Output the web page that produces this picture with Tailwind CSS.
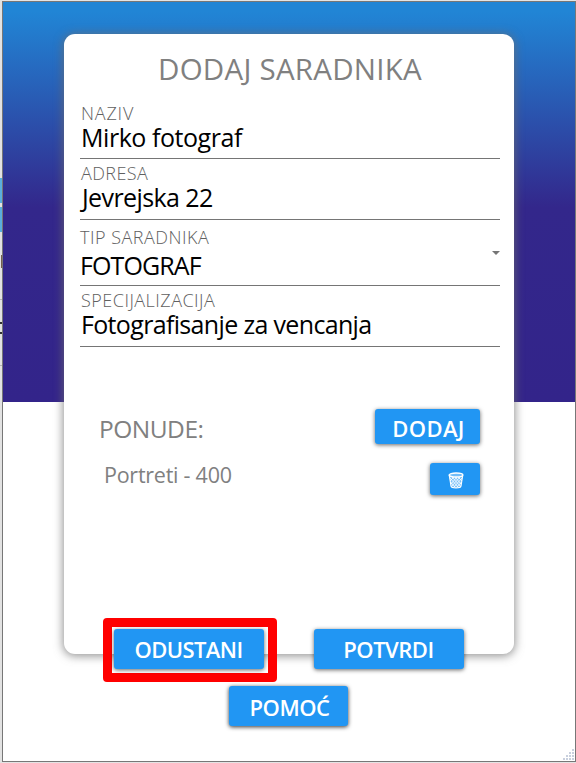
<!DOCTYPE html>
<html lang="sr"><head><meta charset="utf-8"><title>Dodaj saradnika</title>
<script src="https://cdn.jsdelivr.net/npm/@tailwindcss/browser@4"></script></head>
<body class="w-[576px] h-[763px] overflow-hidden bg-[#e4e4e4] font-['Open_Sans',sans-serif]">
<div class="flex h-[763px] w-[576px]">
  <!-- sliver of the window behind -->
  <div class="w-[2px] shrink-0 overflow-hidden bg-[#e2e2e2] flex flex-col">
    <div class="mt-[178px] h-[25px] bg-[#5aaede]"></div>
    <div class="mt-[4px] h-[25px] bg-[#5aaede]"></div>
    <div class="mt-[23px] h-[13px] bg-[linear-gradient(to_right,#e2e2e2_50%,#75604f_50%)]"></div>
    <div class="mt-[31px] h-px bg-[#b5b5b5]"></div>
    <div class="mt-[22px] h-[2px] bg-[#333]"></div>
    <div class="mt-[8px] h-[2px] bg-[#333]"></div>
    <div class="mt-[31px] h-px bg-[#b5b5b5]"></div>
  </div>
  <main class="relative mt-px mb-px flex-1 border border-[#777] bg-[linear-gradient(to_bottom,#2185d5_0px,#2185d5_10px,#33278b_205px,#33248a_399.5px,#fff_400px)] flex flex-col items-center">
    <section class="mt-[32px] w-[450px] h-[620px] shrink-0 rounded-[11px] bg-white shadow-[0_1px_10px_1px_rgba(110,110,110,0.75)] pl-[16px] pr-[14px] pt-[15px] flex flex-col">
      <h1 class="h-[40px] leading-[40px] text-[29.5px] tracking-[0.25px] text-center text-[#808080] whitespace-nowrap">DODAJ SARADNIKA</h1>
      <div class="mt-[14px] h-[56px] border-b border-[#757575] flex flex-col whitespace-nowrap pl-px">
        <label class="h-[20px] leading-[20px] text-[18px] font-light tracking-[0.8px] text-[#606060]">NAZIV</label>
        <span class="-mt-px h-[30px] leading-[30px] text-[25px] tracking-[-0.45px] text-black">Mirko fotograf</span>
      </div>
      <div class="mt-[4px] h-[57px] border-b border-[#757575] flex flex-col whitespace-nowrap">
        <label class="h-[20px] leading-[20px] text-[18px] font-light tracking-[0.4px] text-[#606060] pl-px">ADRESA</label>
        <span class="-mt-px h-[30px] leading-[30px] text-[25px] tracking-[-0.6px] text-black pl-[2px]">Jevrejska 22</span>
      </div>
      <div class="mt-[7px] h-[59px] border-b border-[#757575] flex justify-between whitespace-nowrap">
        <div class="flex flex-col">
          <label class="h-[20px] leading-[20px] text-[18px] font-light tracking-[0.5px] text-[#606060]">TIP SARADNIKA</label>
          <span class="mt-[3px] h-[30px] leading-[30px] text-[25px] tracking-[-0.9px] text-black">FOTOGRAF</span>
        </div>
        <svg class="mt-[24px] h-[4px] w-[8px]" viewBox="0 0 8 4"><path d="M0 0h8L4 4z" fill="#757575"/></svg>
      </div>
      <div class="mt-[4px] h-[57px] border-b border-[#757575] flex flex-col whitespace-nowrap pl-px">
        <label class="h-[20px] leading-[20px] text-[18px] font-light tracking-[0.48px] text-[#606060]">SPECIJALIZACIJA</label>
        <span class="-mt-px h-[30px] leading-[30px] text-[25px] tracking-[-0.66px] text-black">Fotografisanje za vencanja</span>
      </div>
      <div class="mt-[62px] flex h-[36px] items-start justify-between pl-[19px] pr-[20px]">
        <h2 class="mt-[4px] h-[32px] leading-[32px] text-[24.5px] tracking-[-0.5px] text-[#808080]">PONUDE:</h2>
        <button class="h-[35px] w-[105px] rounded-[3px] bg-[#2196f3] pt-[4px] pl-[2px] text-[22px] leading-[31px] font-semibold tracking-[0.4px] text-white shadow-[0_1px_4px_rgba(0,0,0,0.6)]">DODAJ</button>
      </div>
      <div class="mt-[18px] flex h-[32px] items-start justify-between pl-[24px] pr-[20px]">
        <span class="-mt-[3px] h-[30px] leading-[30px] text-[21.5px] tracking-[-0.25px] text-[#808080]">Portreti - 400</span>
        <button class="flex h-[32px] w-[50px] items-center justify-center rounded-[3px] bg-[#2196f3] shadow-[0_1px_4px_rgba(0,0,0,0.6)]">
          <svg class="ml-[2px] mt-[2px] h-[17px] w-[16px]" viewBox="0 0 16 17" fill="none" stroke="#fff"><path d="M1.3 3.5 3 14.2c.2 1.3 1.3 1.8 5 1.8s4.800-.5 5-1.800L14.700 3.500" fill="#fff" fill-opacity=".4" stroke-width="1.100"/><ellipse cx="8" cy="3" rx="6.900" ry="2" fill="#72bdf8" stroke-width="1.400"/><path d="m2 6 8.500 9.500M4 5l8.500 9.500M7 5l6 7M10 5l4 4M2.500 10l5 5.500M14 6l-8.500 9.500M12 5l-8.500 9.500M9 5l-6 7M6 5 2 9M13.500 10l-5 5.500" stroke-width=".8"/></svg>
        </button>
      </div>
    </section>
    <div class="-mt-[36px] mr-[12px] flex w-[361px] shrink-0 justify-between items-start">
      <div class="h-[64px] w-[174px] rounded-[4px] border-[9px] border-[#ff0000] pl-[2px] pt-[2px]">
        <button class="block h-[40px] w-[150px] rounded-[3px] bg-[#2196f3] text-[22px] leading-[40px] font-semibold tracking-[-0.6px] text-white shadow-[0_1px_4px_rgba(0,0,0,0.6)]">ODUSTANI</button>
      </div>
      <button class="mt-[11px] block h-[40px] w-[150px] rounded-[3px] bg-[#2196f3] text-[22px] leading-[40px] font-semibold tracking-[-0.5px] text-white shadow-[0_1px_4px_rgba(0,0,0,0.6)]">POTVRDI</button>
    </div>
    <button class="mt-[4px] mr-px block h-[40px] w-[119px] shrink-0 rounded-[3px] bg-[#2196f3] pt-[2px] pl-[2px] text-[22px] leading-[38px] font-semibold tracking-[-0.5px] text-white shadow-[0_1px_4px_rgba(0,0,0,0.8)]">POMOĆ</button>
    <svg class="absolute right-[1px] bottom-[1px] h-[11px] w-[11px]" viewBox="0 0 11 11" fill="#c9d0de"><path d="M9 0h2v2H9zM9 3h2v2H9zM9 6h2v2H9zM9 9h2v2H9zM6 3h2v2H6zM6 6h2v2H6zM6 9h2v2H6zM3 6h2v2H3zM3 9h2v2H3zM0 9h2v2H0z"/></svg>
  </main>
</div>
</body></html>
